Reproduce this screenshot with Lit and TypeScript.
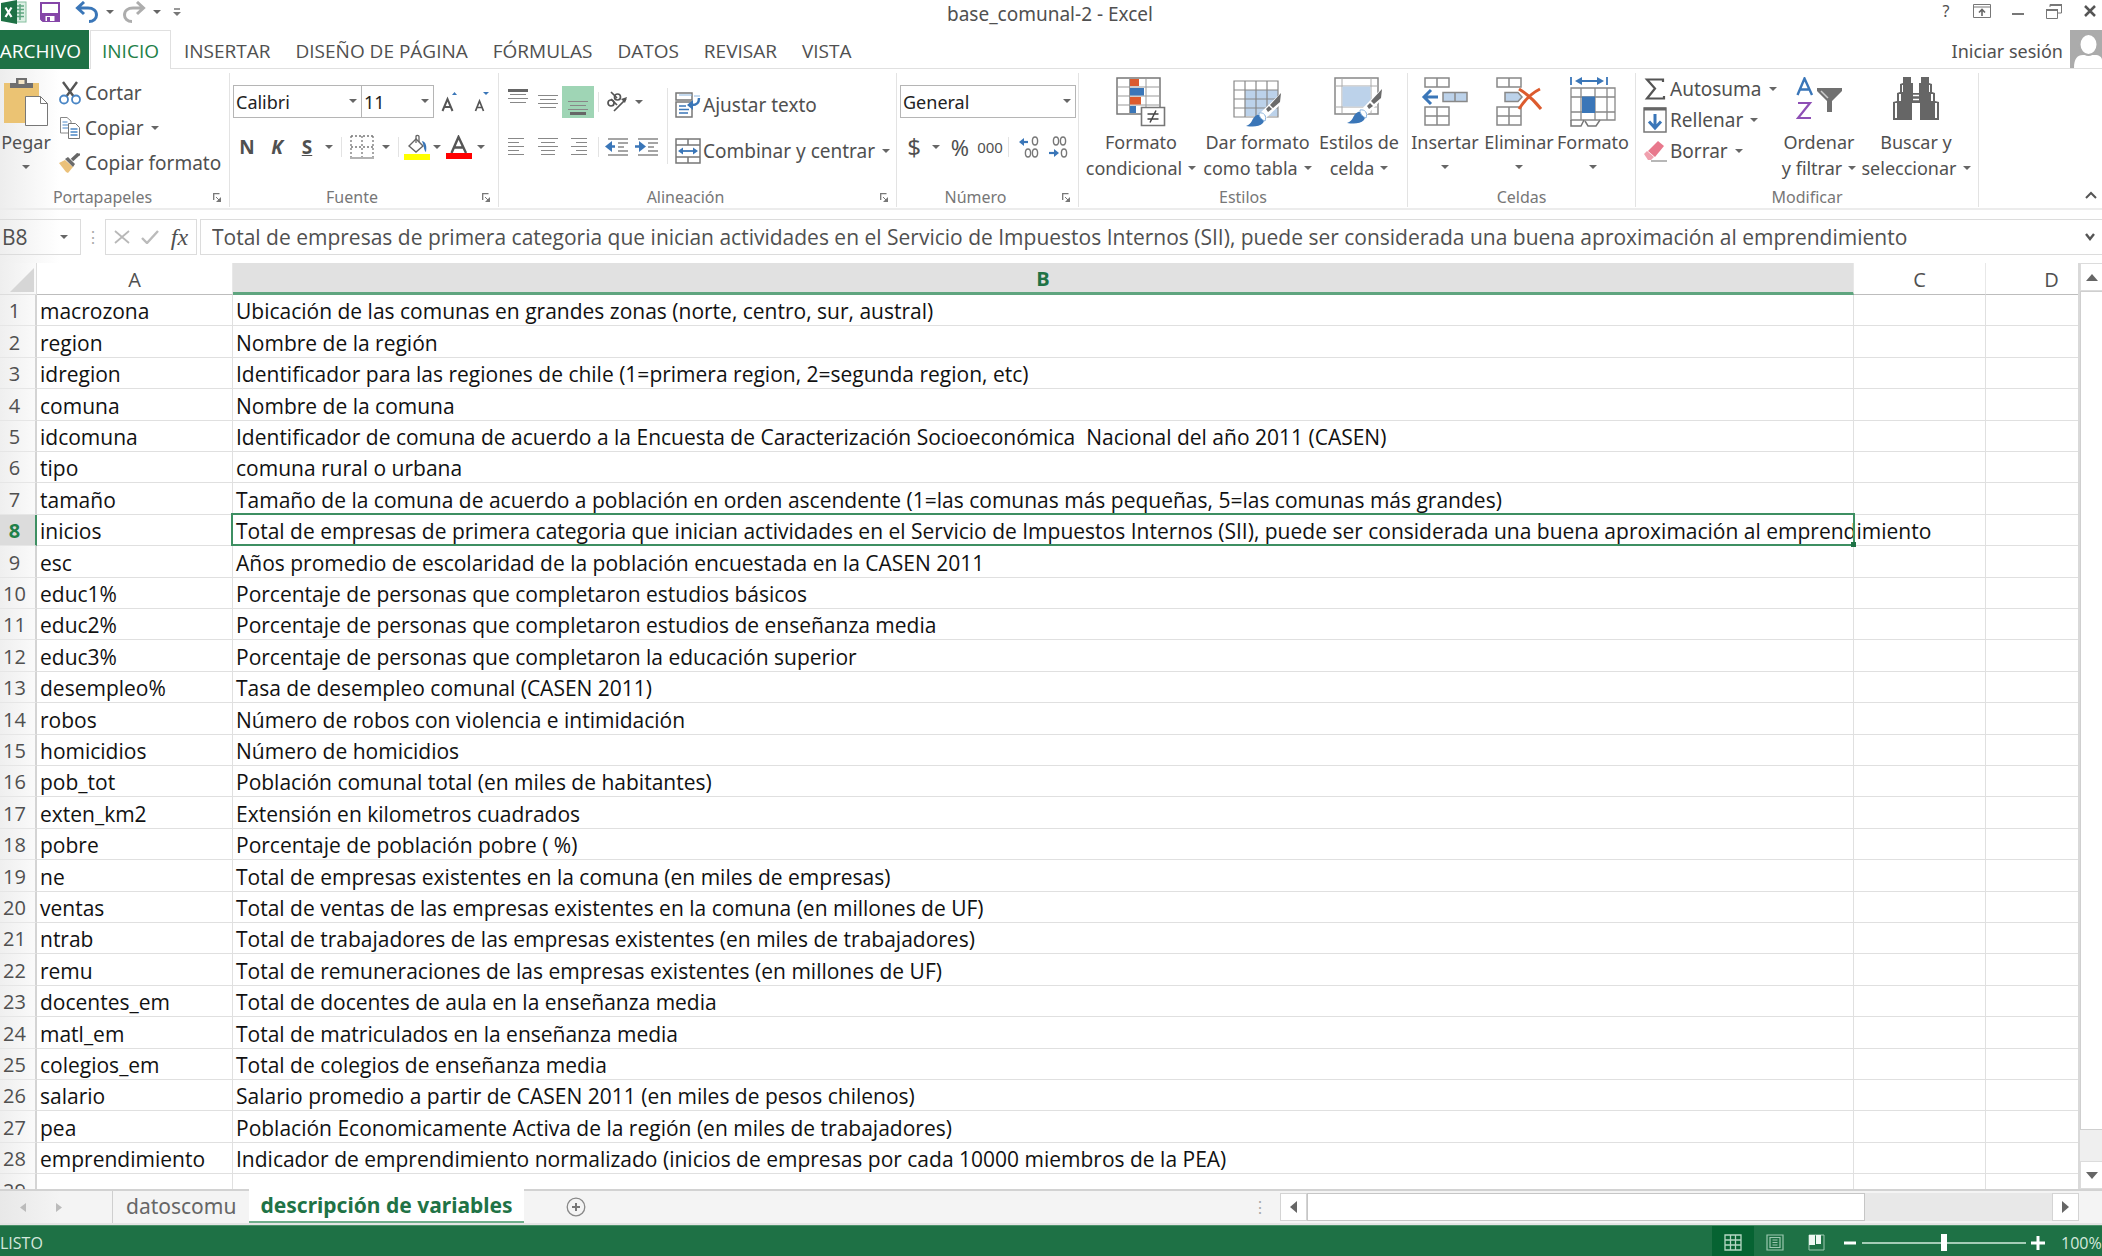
import { LitElement, html, css, nothing, type TemplateResult } from "lit";
import { customElement, property, state } from "lit/decorators.js";
import { classMap } from "lit/directives/class-map.js";

const FORMULA =
  "Total de empresas de primera categoria que inician actividades en el Servicio de Impuestos Internos (SII), puede ser considerada una buena aproximación al emprendimiento";

const ROWS: [string, string][] = [
  ["macrozona", "Ubicación de las comunas en grandes zonas (norte, centro, sur, austral)"],
  ["region", "Nombre de la región"],
  ["idregion", "Identificador para las regiones de chile (1=primera region, 2=segunda region, etc)"],
  ["comuna", "Nombre de la comuna"],
  ["idcomuna", "Identificador de comuna de acuerdo a la Encuesta de Caracterización Socioeconómica\u00a0 Nacional del año 2011 (CASEN)"],
  ["tipo", "comuna rural o urbana"],
  ["tamaño", "Tamaño de la comuna de acuerdo a población en orden ascendente (1=las comunas más pequeñas, 5=las comunas más grandes)"],
  ["inicios", FORMULA],
  ["esc", "Años promedio de escolaridad de la población encuestada en la CASEN 2011"],
  ["educ1%", "Porcentaje de personas que completaron estudios básicos"],
  ["educ2%", "Porcentaje de personas que completaron estudios de enseñanza media"],
  ["educ3%", "Porcentaje de personas que completaron la educación superior"],
  ["desempleo%", "Tasa de desempleo comunal (CASEN 2011)"],
  ["robos", "Número de robos con violencia e intimidación"],
  ["homicidios", "Número de homicidios"],
  ["pob_tot", "Población comunal total (en miles de habitantes)"],
  ["exten_km2", "Extensión en kilometros cuadrados"],
  ["pobre", "Porcentaje de población pobre ( %)"],
  ["ne", "Total de empresas existentes en la comuna (en miles de empresas)"],
  ["ventas", "Total de ventas de las empresas existentes en la comuna (en millones de UF)"],
  ["ntrab", "Total de trabajadores de las empresas existentes (en miles de trabajadores)"],
  ["remu", "Total de remuneraciones de las empresas existentes (en millones de UF)"],
  ["docentes_em", "Total de docentes de aula en la enseñanza media"],
  ["matl_em", "Total de matriculados en la enseñanza media"],
  ["colegios_em", "Total de colegios de enseñanza media"],
  ["salario", "Salario promedio a partir de CASEN 2011 (en miles de pesos chilenos)"],
  ["pea", "Población Economicamente Activa de la región (en miles de trabajadores)"],
  ["emprendimiento", "Indicador de emprendimiento normalizado (inicios de empresas por cada 10000 miembros de la PEA)"],
  ["", ""],
];

const caret = html`<svg class="caret" width="8" height="4" viewBox="0 0 8 4" aria-hidden="true"><path d="M0 0h8L4 4z" fill="#666" /></svg>`;

const icons = {
  excel: html`<svg width="26" height="24" viewBox="0 0 26 24"><rect x="13" y="2" width="12" height="20" fill="#dcefe4" stroke="#86bf9f" /><path d="M15 6h8M15 9.5h8M15 13h8M15 16.500h8M19 4v16" stroke="#5da57f" stroke-width="1.500" /><path d="M0 3 16 0v24L0 21z" fill="#1e7145" /><path d="m4.500 7.500 6 9.500M10.500 7.500l-6 9.500" stroke="#fff" stroke-width="2.200" /></svg>`,
  save: html`<svg width="20" height="20" viewBox="0 0 20 20"><path d="M1 1h18v18H3l-2-2z" fill="#fff" stroke="#8546a8" stroke-width="2" /><path d="M1 11h18v8H1z" fill="#8546a8" /><path d="M5.500 14h9v5h-9z" fill="#fff" /><path d="M7 15h3v4H7z" fill="#8546a8" /></svg>`,
  undo: html`<svg width="24" height="22" viewBox="0 0 24 22"><path d="M9 1 2.500 7 9 13M3 7h10c5 0 8.500 2.500 8.500 7 0 3.500-3 6.500-7.500 6.500" fill="none" stroke="#3a76b8" stroke-width="3" /></svg>`,
  redo: html`<svg width="24" height="22" viewBox="0 0 24 22"><path d="m15 1 6.500 6L15 13M21 7H11c-5 0-8.500 2.500-8.500 7 0 3.500 3 6.500 7.500 6.500" fill="none" stroke="#adadad" stroke-width="3" /></svg>`,
  custom: html`<svg width="8" height="8" viewBox="0 0 8 8"><path d="M1 1h6" stroke="#777" stroke-width="1.500" /><path d="M0 4h8L4 8z" fill="#777" /></svg>`,
  ribbonOpt: html`<svg width="18" height="14" viewBox="0 0 18 14"><path d="M.5.5h17v13H.5zM.5 3h17" fill="none" stroke="#777" /><path d="M9 12V5.500M6 8.500l3-3 3 3" fill="none" stroke="#666" stroke-width="1.600" /></svg>`,
  minimize: html`<svg width="14" height="14" viewBox="0 0 14 14"><path d="M1 10h12" stroke="#777" stroke-width="2" /></svg>`,
  restore: html`<svg width="16" height="16" viewBox="0 0 16 16"><path d="M4 4V1.500h11.500V10H12" fill="none" stroke="#777" /><path d="M4 2h12" stroke="#777" stroke-width="2" /><path d="M.5 6.500h11v9H.5z" fill="#fff" stroke="#777" /><path d="M0 7h12" stroke="#777" stroke-width="2" /></svg>`,
  close: html`<svg width="14" height="14" viewBox="0 0 14 14"><path d="m2 2 10 10M12 2 2 12" stroke="#555" stroke-width="2.500" /></svg>`,
  avatar: html`<svg width="32" height="38" viewBox="0 0 32 38"><path d="M0 0h32v38H0z" fill="#ababab" /><path d="M4 38c0-9 3-13 9-13h12c4 0 7 2 7 5v8z" fill="#fff" /><ellipse cx="18.500" cy="14.500" rx="9" ry="10.500" fill="#fff" stroke="#ababab" stroke-width="2" /></svg>`,
  paste: html`<svg width="46" height="50" viewBox="0 0 46 50"><rect x="1" y="6" width="35" height="40" fill="#ebc373" /><path d="M7 11V6h6V1h11v5h6v5z" fill="#6f6f6f" /><rect x="15.500" y="3" width="6" height="4" fill="#f3e5c6" /><path d="M22.500 19.500h15l7 7v22h-22z" fill="#fff" stroke="#777" /><path d="M37.500 19.500v7h7" fill="none" stroke="#777" /></svg>`,
  cut: html`<svg width="22" height="24" viewBox="0 0 22 24"><path d="m4 1 11 15M18 1 7 16" stroke="#555" stroke-width="2.400" /><circle cx="5" cy="18.500" r="4" fill="#fff" stroke="#4a86c5" stroke-width="1.800" /><circle cx="17" cy="18.500" r="4" fill="#fff" stroke="#4a86c5" stroke-width="1.800" /></svg>`,
  copy: html`<svg width="22" height="22" viewBox="0 0 22 22"><path d="M1.500.5H8L12 4v12H1.500z" fill="#fff" stroke="#888" /><path d="M3.500 5h5M3.500 8h6M3.500 11h6" stroke="#4a86c5" /><path d="M9.500 6.500h7l4 4v11h-11z" fill="#fff" stroke="#777" /><path d="M11.500 12h7M11.500 15h7M11.500 18h7" stroke="#4a86c5" stroke-width="1.300" /></svg>`,
  painter: html`<svg width="22" height="20" viewBox="0 0 22 20"><path d="m0 10 6-3 8 7-5 6-2-1z" fill="#ebc17a" /><path d="m6 6 3-2 7 7-2 3z" fill="#6b6b6b" /><path d="m13 7 6.500-6" stroke="#666" stroke-width="3.500" /><path d="M19 1.500h2" stroke="#666" stroke-width="2" /></svg>`,
  launcher: html`<svg width="8" height="9" viewBox="0 0 8 9"><path d="M.7 7V.7H6.500" fill="none" stroke="#777" stroke-width="1.300" /><path d="m3 4 3 3" stroke="#777" /><path d="M8 4v5H3z" fill="#777" /></svg>`,
  borders: html`<svg width="24" height="24" viewBox="0 0 24 24"><path d="M1 1h22M1 12h22M1 1v21M12 1v21M23 1v21" stroke="#777" stroke-width="1.300" stroke-dasharray="2 2" fill="none" /><path d="M0 23h24" stroke="#999" stroke-width="1.500" /></svg>`,
  fill: html`<svg width="26" height="26" viewBox="0 0 26 26"><path d="m5 12 7-7 7 7-7 6z" fill="#fff" stroke="#666" stroke-width="1.400" /><path d="M12 9V2.500c0-1.500 3-1.500 3 0V8" fill="none" stroke="#666" stroke-width="1.300" /><path d="M18 7c4 1 5 5 4 11-2-1-2-6-3-8z" fill="#3a76b8" /><path d="M0 20h26v6H0z" fill="#ff0" /></svg>`,
  fontColor: html`<svg width="26" height="24" viewBox="0 0 26 24"><path d="M5.500 18 12.500 2 20 18M8 12.500h10" fill="none" stroke="#555" stroke-width="2.400" /><path d="M0 18h26v6H0z" fill="#f00" /></svg>`,
  grow: html`<svg width="18" height="22" viewBox="0 0 18 22"><path d="m1.500 20 5-12 5 12M3 16h7" fill="none" stroke="#555" stroke-width="2" /><path d="M11 4h5l-2.500-3z" fill="#3a76b8" /></svg>`,
  shrink: html`<svg width="18" height="22" viewBox="0 0 18 22"><path d="m2.500 20 4-10 4 10M4 16.500h5" fill="none" stroke="#555" stroke-width="1.700" /><path d="M10 1h6l-3 3z" fill="#3a76b8" /></svg>`,
  orient: html`<svg width="24" height="22" viewBox="0 0 24 22"><g fill="none" stroke="#555" stroke-width="1.700"><circle cx="6" cy="12" r="3" /><path d="m6 8 6 6" /><circle cx="12.500" cy="6" r="3" /><path d="m6 1 6 6M9 20 21 8" /></g><path d="m22 6-6 2 4 4z" fill="#555" /></svg>`,
  outdent: html`<svg width="24" height="20" viewBox="0 0 24 20"><path d="M3 2h20M13 6h10M13 10h6M13 14h10M3 18h20" stroke="#888" stroke-width="1.600" /><path d="M10 9.500H3" stroke="#3a76b8" stroke-width="2.500" /><path d="M7 4 0 9.500 7 15z" fill="#3a76b8" /></svg>`,
  indent: html`<svg width="24" height="20" viewBox="0 0 24 20"><path d="M3 2h20M13 6h10M13 10h6M13 14h10M3 18h20" stroke="#888" stroke-width="1.600" /><path d="M0 9.500h6" stroke="#3a76b8" stroke-width="2.500" /><path d="m4 4 7 5.500L4 15z" fill="#3a76b8" /></svg>`,
  wrap: html`<svg width="26" height="26" viewBox="0 0 26 26"><rect x="1" y="1" width="16" height="7" fill="#fff" stroke="#777" stroke-width="1.500" /><path d="M4 3h13M19 4h6" stroke="#8ab4de" /><rect x="1" y="10" width="16" height="15" fill="#fff" stroke="#777" stroke-width="1.500" /><path d="M4 14h7M4 17.500h10M4 21h9" stroke="#3a76b8" stroke-width="1.500" /><path d="M24 6c0 5-2 7-7 7" fill="none" stroke="#3a76b8" stroke-width="2.500" /><path d="m18 8-6 5 6 5z" fill="#3a76b8" /></svg>`,
  merge: html`<svg width="26" height="26" viewBox="0 0 26 26"><path d="M1 1h24v24H1zM1 7h24M1 19h24M13 1v6M13 19v6" fill="#fff" stroke="#777" stroke-width="1.500" /><path d="M6 13h14" stroke="#3a76b8" stroke-width="1.800" /><path d="M8 9.500 3 13l5 3.500zM18 9.500l5 3.500-5 3.500z" fill="#3a76b8" /></svg>`,
  decInc: html`<svg width="20" height="22" viewBox="0 0 20 22"><path d="M2 6h7" stroke="#3a76b8" stroke-width="2.200" /><path d="M5 2 0 6l5 4z" fill="#3a76b8" /><g fill="none" stroke="#777" stroke-width="1.400"><ellipse cx="16" cy="5" rx="2.600" ry="4" /><ellipse cx="9" cy="17" rx="2.600" ry="4" /><ellipse cx="16" cy="17" rx="2.600" ry="4" /></g></svg>`,
  decDec: html`<svg width="20" height="22" viewBox="0 0 20 22"><path d="M0 17h7" stroke="#3a76b8" stroke-width="2.200" /><path d="m5 13 5 4-5 4z" fill="#3a76b8" /><g fill="none" stroke="#777" stroke-width="1.400"><ellipse cx="7" cy="5" rx="2.600" ry="4" /><ellipse cx="14" cy="5" rx="2.600" ry="4" /><ellipse cx="15" cy="17" rx="2.600" ry="4" /></g></svg>`,
  conditional: html`<svg width="50" height="50" viewBox="0 0 50 50"><path d="M1 1h43v36H1z" fill="#fff" stroke="#777" stroke-width="1.500" /><path d="M1 10h43M1 19h43M1 28h43M13.500 1v36M30 1v36" stroke="#999" /><path d="M14 2h9v7h-9z" fill="#dc5b2e" /><path d="M14 11h14v7.500H14z" fill="#3a76b8" /><path d="M14 20h11v7.500H14z" fill="#dc5b2e" /><path d="M14 29h6v7h-6z" fill="#3a76b8" /><path d="M25.500 30.500h23v18h-23z" fill="#fff" stroke="#777" stroke-width="1.600" /><path d="M31.500 37h11M31.500 42h11M40 33.500l-6 12" stroke="#444" stroke-width="1.500" /></svg>`,
  formatTable: html`<svg width="50" height="50" viewBox="0 0 50 50"><path d="M1 4h44v36H1z" fill="#fff" /><path d="M12 13h33v26H12z" fill="#bcd2ea" /><path d="M1 4h44v36H1zM1 13h44M1 22h44M1 31h44M12 4v36M23 4v36M34 4v36" fill="none" stroke="#888" stroke-width="1.200" /><path d="m50 14-1 12-18 17-6-5z" fill="#fff" /><path d="m48 16-1 9-7 6-3-3zM36 29l3 3-4 3-2-3z" fill="#6b6b6b" /><path d="M13 49c7-2 5-8 11-11 6-1 9 4 6 8-4 4-10 4-17 3z" fill="#3a76b8" /><path d="M26 36c5-1 8 3 6 8-3-1-6-4-6-8z" fill="#fff" stroke="#8ab4de" /></svg>`,
  cellStyles: html`<svg width="50" height="50" viewBox="0 0 50 50"><path d="M1 1h43v36H1z" fill="#fff" stroke="#888" stroke-width="1.500" /><path d="M1 9h43M1 30h43M8 1v36M37 1v36" stroke="#aaa" /><path d="M8.500 9.500h28v20h-28z" fill="#bcd2ea" /><path d="m50 9-1 12-18 19-6-5z" fill="#fff" /><path d="m48 12-1 9-7 6-3-3zM36 26l3 3-4 3-2-3z" fill="#6b6b6b" /><path d="M13 46c7-2 5-8 11-11 6-1 9 4 6 8-4 4-10 4-17 3z" fill="#3a76b8" /><path d="M26 33c5-1 8 3 6 8-3-1-6-4-6-8z" fill="#fff" stroke="#8ab4de" /></svg>`,
  insert: html`<svg width="48" height="50" viewBox="0 0 48 50"><path d="M4 1h24v9H4zM16 1v9M4 30h24v18H4zM4 39h24M16 30v18" fill="#fff" stroke="#888" stroke-width="1.500" /><path d="M22 15.500h24v9H22zM34 15.500v9" fill="#bcd2ea" stroke="#888" stroke-width="1.500" /><path d="M17 20H3M10 13l-7 7 7 7" fill="none" stroke="#3a76b8" stroke-width="3" /></svg>`,
  remove: html`<svg width="48" height="50" viewBox="0 0 48 50"><path d="M2 1h24v9H2zM14 1v9M2 30h24v18H2zM2 39h24M14 30v18" fill="#fff" stroke="#888" stroke-width="1.500" /><path d="M10 15.500h13l4 4.500-4 4.500H10z" fill="#bcd2ea" stroke="#888" stroke-width="1.500" /><path d="M24 12c8 5 15 11 22 20M45 12c-8 4-16 12-21 20" fill="none" stroke="#dc5b2e" stroke-width="3" /></svg>`,
  format: html`<svg width="48" height="50" viewBox="0 0 48 50"><path d="M2 0v8M38 0v8M8 4h24" stroke="#3a76b8" stroke-width="1.800" /><path d="M13 0 6 4l7 4zM28 0l7 4-7 4z" fill="#3a76b8" /><path d="M2 11h44v32H2zM2 20h44M2 35h44M12 11v32M26 11v32M38 11v32" fill="#fff" stroke="#888" stroke-width="1.300" /><path d="M13 19.500h13V36H13z" fill="#3a76b8" /><path d="M2 43v6h10l3-6M16 44l3 5h8l4-6" fill="none" stroke="#777" stroke-width="1.500" /></svg>`,
  sigma: html`<svg width="24" height="24" viewBox="0 0 24 24"><path d="M20 5V2.500H4l8 9-8 10h17V19" fill="none" stroke="#555" stroke-width="2.200" /></svg>`,
  fillDown: html`<svg width="24" height="26" viewBox="0 0 24 26"><path d="M1 1h22v24H1z" fill="#fff" stroke="#777" stroke-width="1.500" /><path d="M1 2h22" stroke="#666" stroke-width="3" /><path d="M12 7v14M6 14.500l6 6.500 6-6.500" fill="none" stroke="#3a76b8" stroke-width="3" /></svg>`,
  erase: html`<svg width="24" height="22" viewBox="0 0 24 22"><path d="m5 11 10-10 6 5-9 11z" fill="#e8788c" /><path d="m1 14 3-3 7 6-3 3H5z" fill="#f0a0ae" /><path d="M8 21h16" stroke="#888" stroke-width="1.200" /></svg>`,
  sort: html`<svg width="46" height="44" viewBox="0 0 46 44"><path d="M1.500 18 8.500 1.500 16 18M4 12.500h10" fill="none" stroke="#3a76b8" stroke-width="2.400" /><path d="M2 26h12L2 41h13" fill="none" stroke="#8e4fb5" stroke-width="2.200" /><path d="M21 11h25v3L36 24v11h-5V24L21 14z" fill="#707070" /><path d="m25 14 7 7" stroke="#ccc" stroke-width="1.500" /></svg>`,
  find: html`<svg width="46" height="44" viewBox="0 0 46 44"><g fill="#666"><path d="M10 0h8v6h2v10h6V6h2V0h8v6l3 1v8l3 1v8l4 1v18H27V26h-8v17H0V25l4-1v-8l3-1V7l3-1z" /></g><path d="M2 26h2v15H2zM42 26h2v15h-2zM6 17h2v7H6zM38 17h2v7h-2zM9 8h1v7H9zM36 8h1v7h-1z" fill="#fff" /><path d="M20 18.500h6M20 22.500h6" stroke="#fff" stroke-width="1.300" /></svg>`,
  chevUp: html`<svg width="12" height="8" viewBox="0 0 12 8"><path d="m1 7 5-5 5 5" fill="none" stroke="#555" stroke-width="2" /></svg>`,
  chevDown: html`<svg width="12" height="8" viewBox="0 0 12 8"><path d="m2 1 4 5 4-5" fill="none" stroke="#555" stroke-width="2.400" /></svg>`,
  cancel: html`<svg width="16" height="14" viewBox="0 0 16 14"><path d="m1 1 14 12M15 1 1 13" stroke="#b8b8b8" stroke-width="1.800" /></svg>`,
  accept: html`<svg width="18" height="14" viewBox="0 0 18 14"><path d="m1 8 5 5L17 1" fill="none" stroke="#bbb" stroke-width="2.400" /></svg>`,
  addSheet: html`<svg width="20" height="20" viewBox="0 0 20 20"><circle cx="10" cy="10" r="8.800" fill="none" stroke="#888" stroke-width="1.300" /><path d="M10 6v8M6 10h8" stroke="#777" stroke-width="2" /></svg>`,
  viewNormal: html`<svg width="18" height="17" viewBox="0 0 18 17"><path d="M1 1h16v15H1zM1 6h16M1 11h16M6.500 1v15M11.500 1v15" fill="none" stroke="#b5d8c4" stroke-width="1.300" /></svg>`,
  viewPage: html`<svg width="18" height="17" viewBox="0 0 18 17"><path d="M1 1h16v15H1zM4 3.500h10v10H4zM6.500 6h5M6.500 8.500h5M6.500 11h5" fill="none" stroke="#9cc8b0" stroke-width="1.200" /></svg>`,
  viewBreak: html`<svg width="18" height="17" viewBox="0 0 18 17"><path d="M1 1h15v15H1z" fill="none" stroke="#9cc8b0" /><path d="M1 1h6v10H1zM8 1h5v9H8z" fill="#eef7f2" /></svg>`,
};

/* Paragraph alignment glyph: one horizontal bar for every [x, y, width] entry. */
const bars = (list: [number, number, number][], w: number, h: number, heavy = -1) => html`<svg width=${w} height=${h} viewBox="0 0 ${w} ${h}">
  ${list.map(([x, y, l], i) => html`<svg overflow="visible"><rect x=${x} y=${y} width=${l} height=${i === heavy ? 3 : 1} fill=${i === heavy ? "#666" : "#888"} /></svg>`)}
</svg>`;

const alignTop = bars([[0, 0, 20], [2, 5, 16], [0, 9, 20], [2, 13, 16]], 20, 26, 0);
const alignMid = bars([[0, 6, 20], [2, 10, 16], [0, 14, 20], [2, 18, 16]], 20, 26);
const alignBot = bars([[0, 12, 20], [2, 16, 16], [0, 20, 20], [2, 23, 16]], 20, 26, 3);
const alignLeft = bars([[0, 1, 16], [0, 5, 11], [0, 9, 16], [0, 13, 11], [0, 17, 16]], 20, 20);
const alignCenter = bars([[0, 1, 20], [3, 5, 14], [0, 9, 20], [3, 13, 14], [3, 17, 14]], 20, 20);
const alignRight = bars([[3, 1, 16], [8, 5, 11], [3, 9, 16], [8, 13, 11], [3, 17, 16]], 20, 20);

const base = css`
  :host { display: block; box-sizing: border-box; font-family: "Noto Sans", "Open Sans", sans-serif; color: #505050; }
  *, *::before { box-sizing: border-box; }
  button, input, select { font: inherit; color: inherit; margin: 0; padding: 0; border: 0; background: none; border-radius: 0; }
  button { display: inline-flex; align-items: center; justify-content: center; white-space: nowrap; cursor: default; }
  svg { display: block; flex: none; }
`;

@customElement("title-bar")
class TitleBar extends LitElement {
  static styles = [base, css`
    .bar { display: grid; grid-template-columns: 1fr auto 1fr; height: 30px; padding: 0 2px 0 0; }
    .quick { display: flex; align-items: flex-start; }
    .quick button { height: 24px; }
    .app { width: 27px; }
    .save { width: 46px; }
    .undo, .redo { width: 26px; margin-left: 1px; }
    .more { width: 20px; }
    .title { font-size: 19px; line-height: 28px; }
    .win { display: flex; justify-content: flex-end; gap: 16px; height: 22px; }
    .win button { width: 20px; font-size: 16px; }
  `];
  render() {
    return html`<header class="bar">
      <div class="quick">
        <button class="app" aria-label="Excel">${icons.excel}</button>
        <button class="save" aria-label="Guardar">${icons.save}</button>
        <button class="undo" aria-label="Deshacer">${icons.undo}</button>
        <button class="more" aria-label="Opciones de deshacer">${caret}</button>
        <button class="redo" aria-label="Rehacer">${icons.redo}</button>
        <button class="more" aria-label="Opciones de rehacer">${caret}</button>
        <button class="more" aria-label="Personalizar barra">${icons.custom}</button>
      </div>
      <div class="title">base_comunal-2 - Excel</div>
      <div class="win">
        <button aria-label="Ayuda">?</button>
        <button aria-label="Opciones de la cinta">${icons.ribbonOpt}</button>
        <button aria-label="Minimizar">${icons.minimize}</button>
        <button aria-label="Restaurar">${icons.restore}</button>
        <button aria-label="Cerrar">${icons.close}</button>
      </div>
    </header>`;
  }
}

@customElement("ribbon-tabs")
class RibbonTabs extends LitElement {
  @state() private active = "INICIO";
  static styles = [base, css`
    .tabs { display: flex; gap: 1px; height: 39px; border-bottom: 1px solid #e0e0e0; font-family: "Open Sans", "Noto Sans", sans-serif; font-size: 19px; }
    button { height: 38px; padding: 2px 11px 0; border: 1px solid transparent; border-bottom: 0; }
    .file { height: 39px; padding: 2px 8px 0 0; width: 89px; justify-content: flex-end; background: #1e7145; color: #fff; border: 0; }
    .active { height: 39px; color: #1f8048; background: #fff; border-color: #e0e0e0; }
    .user { display: flex; align-items: center; gap: 6px; margin-left: auto; font-family: "Noto Sans", sans-serif; font-size: 18px; }
    .user button { padding: 2px 0 0; }
  `];
  render() {
    const tabs = ["INICIO", "INSERTAR", "DISEÑO DE PÁGINA", "FÓRMULAS", "DATOS", "REVISAR", "VISTA"];
    return html`<nav class="tabs">
      <button class="file">ARCHIVO</button>
      ${tabs.map((t) => html`<button class=${classMap({ active: t === this.active })} @click=${() => (this.active = t)}>${t}</button>`)}
      <div class="user"><button>Iniciar sesión</button>${icons.avatar}</div>
    </nav>`;
  }
}

@customElement("ribbon-group")
class RibbonGroup extends LitElement {
  @property() label = "";
  @property({ type: Boolean }) launcher = false;
  static styles = [base, css`
    :host { display: flex; flex-direction: column; border-right: 1px solid #e3e3e3; height: 134px; }
    .body { flex: 1; display: flex; min-height: 0; }
    .foot { display: flex; align-items: center; height: 20px; padding-right: 8px; font-size: 16px; line-height: 20px; color: #777; }
    .name { flex: 1; text-align: center; padding-left: 8px; }
    .wide { padding: 0 8px 0 0; }
  `];
  render() {
    return html`<div class="body"><slot></slot></div>
      <div class="foot"><span class="name ${this.launcher ? "wide" : ""}">${this.label}</span>
      ${this.launcher ? html`<button aria-label=${"Más opciones de " + this.label}>${icons.launcher}</button>` : nothing}</div>`;
  }
}

@customElement("excel-ribbon")
class ExcelRibbon extends LitElement {
  static styles = [base, css`
    .ribbon { display: flex; height: 141px; padding-top: 4px; border-bottom: 2px solid #ececec; font-size: 18px; line-height: 26px; background: linear-gradient(90deg, #ededed, #fff 60px); }
    .clip { width: 230px; }
    .font { width: 269px; }
    .align { width: 398px; }
    .num { width: 182px; }
    .styles { width: 329px; }
    .cells { width: 228px; }
    .edit { width: 343px; }
    .big { display: flex; flex-direction: column; align-items: center; justify-content: flex-start; padding-top: 4px; height: 114px; }
    .art { height: 52px; }
    .line { display: flex; align-items: center; gap: 6px; height: 26px; }
    .solo { height: 24px; display: flex; align-items: center; }
    .list { display: flex; flex-direction: column; align-items: flex-start; }
    .item { display: flex; justify-content: flex-start; gap: 3px; font-size: 19px; }
    .item .caret { margin-left: 4px; }
    .clip .list { padding: 2px 0 0 6px; }
    .clip .item { height: 35px; }
    .ico { width: 24px; display: flex; justify-content: center; }
    .edit .list { width: 142px; padding: 0 0 0 7px; }
    .edit .item { height: 31px; }
    .rows { display: flex; flex-direction: column; gap: 12px; padding: 12px 0 0 3px; }
    .row { display: flex; align-items: center; height: 33px; }
    .combo { position: relative; display: flex; border: 1px solid #b5b5b5; height: 33px; }
    .combo + .combo { border-left: 0; }
    .combo select { appearance: none; width: 100%; padding: 0 16px 0 2px; color: #222; }
    .combo .caret { position: absolute; right: 4px; top: 13px; }
    .face { width: 129px; }
    .size { width: 72px; }
    .general { width: 176px; }
    .t12 { width: 12px; height: 32px; }
    .t24 { width: 24px; height: 32px; }
    .t32 { width: 32px; height: 32px; }
    .t28 { width: 28px; height: 32px; }
    .t16 { width: 16px; height: 32px; }
    .bold { font-weight: 700; font-size: 19px; }
    .ital { font-style: italic; }
    .under { text-decoration: underline; }
    .sep { width: 1px; height: 20px; background: #e3e3e3; margin: 0 4px; }
    .tall { width: 1px; height: 76px; background: #e3e3e3; margin: 15px 8px 0 4px; }
    .on { background: #9fd5b5; }
    .wraps { display: flex; flex-direction: column; gap: 10px; padding-top: 14px; }
    .wraps .item { height: 36px; }
    .cur { font-size: 24px; }
    .pct { font-size: 22px; }
    .zeros { font-size: 15px; }
    .paste { width: 52px; }
    .w118 { width: 118px; }
    .w115 { width: 115px; }
    .w88 { width: 88px; }
    .w74 { width: 74px; }
    .wsort { width: 82px; }
    .wfind { width: 112px; }
    .styles .big, .cells .big { flex: none; }
    .pads { display: flex; padding-left: 3px; }
    .collapse { margin: auto 5px 4px auto; height: 18px; }
  `];

  private big(cls: string, icon: TemplateResult, first: string, second = "") {
    return html`<button class="big ${cls}">
      <span class="art">${icon}</span><span class="line">${first}</span>
      ${second ? html`<span class="line">${second}${caret}</span>` : html`<span class="solo">${caret}</span>`}
    </button>`;
  }

  private item(icon: TemplateResult, text: string, menu = false) {
    return html`<button class="item"><span class="ico">${icon}</span>${text}${menu ? caret : nothing}</button>`;
  }

  private combo(cls: string, label: string, value: string) {
    return html`<label class="combo ${cls}"><select aria-label=${label}><option>${value}</option></select>${caret}</label>`;
  }

  render() {
    return html`<div class="ribbon">
      <ribbon-group class="clip" label="Portapapeles" launcher>
        ${this.big("paste", icons.paste, "Pegar")}
        <div class="list">
          ${this.item(icons.cut, "Cortar")} ${this.item(icons.copy, "Copiar", true)} ${this.item(icons.painter, "Copiar formato")}
        </div>
      </ribbon-group>
      <ribbon-group class="font" label="Fuente" launcher>
        <div class="rows">
          <div class="row">
            ${this.combo("face", "Fuente", "Calibri")}${this.combo("size", "Tamaño de fuente", "11")}
            <button class="t32" aria-label="Aumentar tamaño">${icons.grow}</button>
            <button class="t32" aria-label="Disminuir tamaño">${icons.shrink}</button>
          </div>
          <div class="row">
            <button class="t28 bold">N</button><button class="t32 bold ital">K</button><button class="t28 bold under">S</button>
            <button class="t16" aria-label="Opciones de subrayado">${caret}</button>
            <span class="sep"></span>
            <button class="t32" aria-label="Bordes">${icons.borders}</button><button class="t16" aria-label="Más bordes">${caret}</button>
            <span class="sep"></span>
            <button class="t28" aria-label="Color de relleno">${icons.fill}</button><button class="t12" aria-label="Más colores de relleno">${caret}</button>
            <button class="t32" aria-label="Color de fuente">${icons.fontColor}</button><button class="t12" aria-label="Más colores de fuente">${caret}</button>
          </div>
        </div>
      </ribbon-group>
      <ribbon-group class="align" label="Alineación" launcher>
        <div class="rows">
          <div class="row">
            <button class="t32" aria-label="Alinear arriba">${alignTop}</button>
            <button class="t28" aria-label="Alinear en el medio">${alignMid}</button>
            <button class="t32 on" aria-label="Alinear abajo">${alignBot}</button>
            <span class="sep"></span>
            <button class="t28" aria-label="Orientación">${icons.orient}</button><button class="t16" aria-label="Más orientaciones">${caret}</button>
          </div>
          <div class="row">
            <button class="t32" aria-label="Alinear a la izquierda">${alignLeft}</button>
            <button class="t28" aria-label="Centrar">${alignCenter}</button>
            <button class="t32" aria-label="Alinear a la derecha">${alignRight}</button>
            <span class="sep"></span>
            <button class="t28" aria-label="Disminuir sangría">${icons.outdent}</button>
            <button class="t32" aria-label="Aumentar sangría">${icons.indent}</button>
          </div>
        </div>
        <span class="tall"></span>
        <div class="wraps">${this.item(icons.wrap, "Ajustar texto")} ${this.item(icons.merge, "Combinar y centrar", true)}</div>
      </ribbon-group>
      <ribbon-group class="num" label="Número" launcher>
        <div class="rows">
          <div class="row">${this.combo("general", "Formato de número", "General")}</div>
          <div class="row">
            <button class="t28 cur">$</button><button class="t16" aria-label="Más monedas">${caret}</button>
            <button class="t32 pct">%</button><button class="t28 zeros">000</button>
            <span class="sep"></span>
            <button class="t32" aria-label="Aumentar decimales">${icons.decInc}</button>
            <button class="t28" aria-label="Disminuir decimales">${icons.decDec}</button>
          </div>
        </div>
      </ribbon-group>
      <ribbon-group class="styles" label="Estilos">
        <div class="pads">
          ${this.big("w118", icons.conditional, "Formato", "condicional")}
          ${this.big("w115", icons.formatTable, "Dar formato", "como tabla")}
          ${this.big("w88", icons.cellStyles, "Estilos de", "celda")}
        </div>
      </ribbon-group>
      <ribbon-group class="cells" label="Celdas">
        ${this.big("w74", icons.insert, "Insertar")} ${this.big("w74", icons.remove, "Eliminar")} ${this.big("w74", icons.format, "Formato")}
      </ribbon-group>
      <ribbon-group class="edit" label="Modificar">
        <div class="list">
          ${this.item(icons.sigma, "Autosuma", true)} ${this.item(icons.fillDown, "Rellenar", true)} ${this.item(icons.erase, "Borrar", true)}
        </div>
        ${this.big("wsort", icons.sort, "Ordenar", "y filtrar")} ${this.big("wfind", icons.find, "Buscar y", "seleccionar")}
      </ribbon-group>
      <button class="collapse" aria-label="Contraer la cinta">${icons.chevUp}</button>
    </div>`;
  }
}

@customElement("formula-bar")
class FormulaBar extends LitElement {
  static styles = [base, css`
    .bar { display: flex; align-items: stretch; height: 53px; padding: 9px 0 8px; font-family: "Open Sans", "Noto Sans", sans-serif; font-size: 21px; background: linear-gradient(90deg, #eee, #fff 60px); }
    .name { display: flex; align-items: center; width: 81px; border: 1px solid #dcdcdc; border-left: 0; padding-right: 12px; }
    .name input { flex: 1; min-width: 0; padding-left: 2px; }
    .dots { width: 24px; display: flex; align-items: center; justify-content: center; color: #aaa; font-size: 16px; }
    .tools { display: flex; align-items: center; justify-content: space-around; width: 92px; border: 1px solid #dcdcdc; padding: 0 2px; }
    .fx { font-family: "Liberation Serif", serif; font-style: italic; font-size: 24px; }
    .value { flex: 1; display: flex; align-items: center; margin-left: 3px; border: 1px solid #dcdcdc; border-right: 0; padding: 0 6px 0 11px; }
    .value input { flex: 1; min-width: 0; }
  `];
  render() {
    return html`<div class="bar">
      <label class="name"><input aria-label="Cuadro de nombres" .value=${"B8"} />${caret}</label>
      <span class="dots">⋮</span>
      <div class="tools">
        <button aria-label="Cancelar">${icons.cancel}</button><button aria-label="Introducir">${icons.accept}</button><button class="fx">fx</button>
      </div>
      <label class="value"><input aria-label="Barra de fórmulas" .value=${FORMULA} /><button aria-label="Expandir">${icons.chevDown}</button></label>
    </div>`;
  }
}

@customElement("sheet-grid")
class SheetGrid extends LitElement {
  static styles = [base, css`
    :host { flex: 1; min-height: 0; display: flex; }
    .view { flex: 1; min-width: 0; overflow: hidden; border-right: 2px solid #d9d9d9; }
    table { table-layout: fixed; width: 2118px; border-collapse: separate; border-spacing: 0; font-family: "Open Sans", "Noto Sans", sans-serif; font-size: 21px; line-height: 28px; color: #111; }
    .c0 { width: 37px; } .ca { width: 196px; } .cb { width: 1621px; } .cc { width: 132px; }
    th { font-weight: 400; font-size: 20px; color: #505050; padding: 2px 0 0; white-space: nowrap; }
    thead th { height: 32px; border-bottom: 1px solid #bdbdbd; border-right: 1px solid #e8e8e8; line-height: 26px; }
    thead .corner { background: linear-gradient(90deg, #eee, #fafafa); border-color: #ddd; }
    .corner svg { margin: 0 2px 0 auto; }
    thead .sel { background: #e1e1e1; color: #1f7346; font-weight: 700; border-bottom: 3px solid #5fa57f; }
    tbody th { border-right: 2px solid #d4d4d4; border-bottom: 1px solid #e6e6e6; background: linear-gradient(90deg, #efefef, #fafafa); text-align: center; padding-right: 6px; }
    td { padding: 2px 0 0 3px; border-right: 1px solid #e0e0e0; border-bottom: 1px solid #e0e0e0; white-space: nowrap; }
    tbody tr { height: 31px; }
    tbody tr:nth-child(5n + 2), tbody tr:nth-child(5n + 4) { height: 32px; }
    tbody .rsel { background: #dcdcdc; color: #1f8048; font-weight: 700; border-right-color: #3d8f62; }
    .cur { position: relative; }
    .frame { position: absolute; inset: -2px -2px -1px -2px; border: 2px solid #3d8f62; }
    .knob { position: absolute; right: -3px; bottom: -3px; width: 5px; height: 5px; background: #1f7346; }
    .scroll { width: 22px; display: flex; flex-direction: column; background: #efefef; }
    .scroll button { height: 28px; background: #fff; border: 1px solid #dcdcdc; border-right: 0; }
    .thumb { flex: 1; background: #fff; border: 1px solid #cfcfcf; border-right: 0; margin-bottom: 31px; }
  `];
  render() {
    return html`<div class="view">
        <table>
          <colgroup><col class="c0" /><col class="ca" /><col class="cb" /><col class="cc" /><col class="cc" /></colgroup>
          <thead><tr>
            <th class="corner" aria-label="Seleccionar todo"><svg width="24" height="24" viewBox="0 0 24 24"><path d="M24 0v24H0z" fill="#d6d6d6" /></svg></th>
            <th>A</th><th class="sel">B</th><th>C</th><th>D</th>
          </tr></thead>
          <tbody>
            ${ROWS.map(([a, b], i) => html`<tr>
              <th class=${classMap({ rsel: i === 7 })}>${i + 1}</th>
              <td>${a}</td>
              <td class=${classMap({ cur: i === 7 })}>${b}${i === 7 ? html`<span class="frame"><span class="knob"></span></span>` : nothing}</td>
              <td></td><td></td>
            </tr>`)}
          </tbody>
        </table>
      </div>
      <div class="scroll">
        <button aria-label="Subir"><svg width="12" height="7" viewBox="0 0 12 7"><path d="M6 0l6 7H0z" fill="#666" /></svg></button>
        <div class="thumb"></div>
        <button aria-label="Bajar"><svg width="12" height="7" viewBox="0 0 12 7"><path d="M0 0h12L6 7z" fill="#666" /></svg></button>
      </div>`;
  }
}

@customElement("sheet-tabs")
class SheetTabs extends LitElement {
  static styles = [base, css`
    .bar { display: flex; height: 36px; background: #f4f4f4; border-top: 2px solid #d2d2d2; border-bottom: 2px solid #e4e4e4; font-size: 21px; }
    .nav { display: flex; width: 113px; padding-left: 5px; border-right: 1px solid #cfcfcf; background: linear-gradient(90deg, #e8e8e8, #f4f4f4 60px); }
    .nav button { width: 36px; }
    .tab { height: 32px; padding: 0 13px 3px; color: #666; }
    .active { position: relative; top: -2px; height: 34px; padding: 0 11px; background: #fff; color: #1f7346; font-weight: 700; border-bottom: 2px solid #6fae8b; }
    .add { margin-left: 42px; }
    .dots { margin-left: auto; width: 40px; text-align: center; color: #aaa; font-size: 16px; line-height: 32px; }
    .scroll { display: flex; width: 38%; margin: 2px 23px 2px 0; background: #e8e8e8; }
    .scroll button { width: 27px; background: #fff; border: 1px solid #d4d4d4; }
    .thumb { width: 558px; background: #fff; border: 1px solid #c6c6c6; margin-right: auto; }
  `];
  render() {
    return html`<div class="bar">
      <div class="nav">
        <button aria-label="Hoja anterior"><svg width="6" height="9" viewBox="0 0 6 9"><path d="M6 0v9L0 4.500z" fill="#bbb" /></svg></button>
        <button aria-label="Hoja siguiente"><svg width="6" height="9" viewBox="0 0 6 9"><path d="M0 0v9l6-4.500z" fill="#bbb" /></svg></button>
      </div>
      <button class="tab">datoscomu</button><button class="active">descripción de variables</button>
      <button class="add" aria-label="Hoja nueva">${icons.addSheet}</button>
      <span class="dots">⋮</span>
      <div class="scroll">
        <button aria-label="Desplazar a la izquierda"><svg width="7" height="12" viewBox="0 0 7 12"><path d="M7 0v12L0 6z" fill="#666" /></svg></button>
        <div class="thumb"></div>
        <button aria-label="Desplazar a la derecha"><svg width="7" height="12" viewBox="0 0 7 12"><path d="M0 0v12l7-6z" fill="#666" /></svg></button>
      </div>
    </div>`;
  }
}

@customElement("status-bar")
class StatusBar extends LitElement {
  static styles = [base, css`
    .bar { display: flex; align-items: stretch; height: 31px; background: #1e7145; color: #d5e8dd; font-family: "Open Sans", sans-serif; font-size: 16px; line-height: 34px; overflow: hidden; border-top: 1px solid #4b9069; }
    .state { margin-right: auto; }
    .view { width: 42px; padding-top: 3px; }
    .on { background: #066332; }
    .step { width: 24px; padding-top: 3px; }
    .zoom { width: 164px; appearance: none; align-self: center; height: 18px; margin-top: 3px; background: linear-gradient(#a5cdb7, #a5cdb7) center / 100% 2px no-repeat; }
    .zoom::-webkit-slider-thumb { appearance: none; width: 6px; height: 17px; background: #fff; }
    .pct { width: 41px; margin-left: 11px; white-space: nowrap; }
  `];
  render() {
    return html`<footer class="bar">
      <span class="state">LISTO</span>
      <button class="view on" aria-label="Normal">${icons.viewNormal}</button>
      <button class="view" aria-label="Diseño de página">${icons.viewPage}</button>
      <button class="view" aria-label="Vista previa de salto de página">${icons.viewBreak}</button>
      <button class="step" aria-label="Alejar"><svg width="12" height="12" viewBox="0 0 12 12"><path d="M0 6h12" stroke="#fff" stroke-width="3" /></svg></button>
      <input class="zoom" type="range" aria-label="Zoom" min="0" max="200" value="100" />
      <button class="step" aria-label="Acercar"><svg width="14" height="14" viewBox="0 0 14 14"><path d="M0 7h14M7 0v14" stroke="#fff" stroke-width="3" /></svg></button>
      <span class="pct">100%</span>
    </footer>`;
  }
}

@customElement("app-root")
class AppRoot extends LitElement {
  static styles = css`
    :host { display: flex; flex-direction: column; height: 100vh; overflow: hidden; background: #fff; }
  `;
  render() {
    return html`<title-bar></title-bar><ribbon-tabs></ribbon-tabs><excel-ribbon></excel-ribbon><formula-bar></formula-bar>
      <sheet-grid></sheet-grid><sheet-tabs></sheet-tabs><status-bar></status-bar>`;
  }
}
